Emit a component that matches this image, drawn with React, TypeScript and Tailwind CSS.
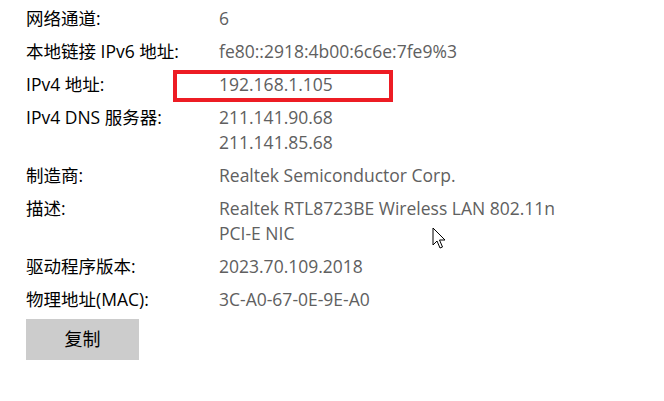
const rows: { label: string; values: string[] }[] = [
  { label: '网络通道:', values: ['6'] },
  { label: '本地链接 IPv6 地址:', values: ['fe80::2918:4b00:6c6e:7fe9%3'] },
  { label: 'IPv4 地址:', values: ['192.168.1.105'] },
  { label: 'IPv4 DNS 服务器:', values: ['211.141.90.68', '211.141.85.68'] },
  { label: '制造商:', values: ['Realtek Semiconductor Corp.'] },
  { label: '描述:', values: ['Realtek RTL8723BE Wireless LAN 802.11n', 'PCI-E NIC'] },
  { label: '驱动程序版本:', values: ['2023.70.109.2018'] },
  { label: '物理地址(MAC):', values: ['3C-A0-67-0E-9E-A0'] },
];

export default function App() {
  return (
    <div
      className="relative w-[664px] h-[401px] bg-white overflow-hidden"
      style={{ fontFamily: '"Open Sans", "Noto Sans CJK SC", sans-serif' }}
    >
      <div className="flex flex-col gap-[8px] pt-[6px] pl-[26px] text-[17.5px] leading-[25px]">
        {rows.map(r => (
          <div key={r.label} className="flex">
            <div className="w-[193px] shrink-0 text-black">{r.label}</div>
            <div className="flex flex-col text-[#606060]">
              {r.values.map(v => (
                <span key={v}>{v}</span>
              ))}
            </div>
          </div>
        ))}
        <button className="mt-[-1px] w-[113px] h-[41px] bg-[#cccccc] text-black text-[18px]">
          复制
        </button>
      </div>

      {/* red highlight */}
      <div className="absolute left-[173px] top-[70px] w-[220px] h-[32px] border-4 border-[#ed1c24]" />

      {/* mouse cursor */}
      <svg className="absolute left-[432px] top-[227px]" width="14" height="24" viewBox="0 0 14 24">
        <path
          d="M1 1 L1 18 L5 14 L8 21 L10.5 20 L7.5 13 L13 13 Z"
          fill="#fff"
          stroke="#000"
          strokeWidth="1"
          strokeLinejoin="miter"
        />
      </svg>
    </div>
  );
}
